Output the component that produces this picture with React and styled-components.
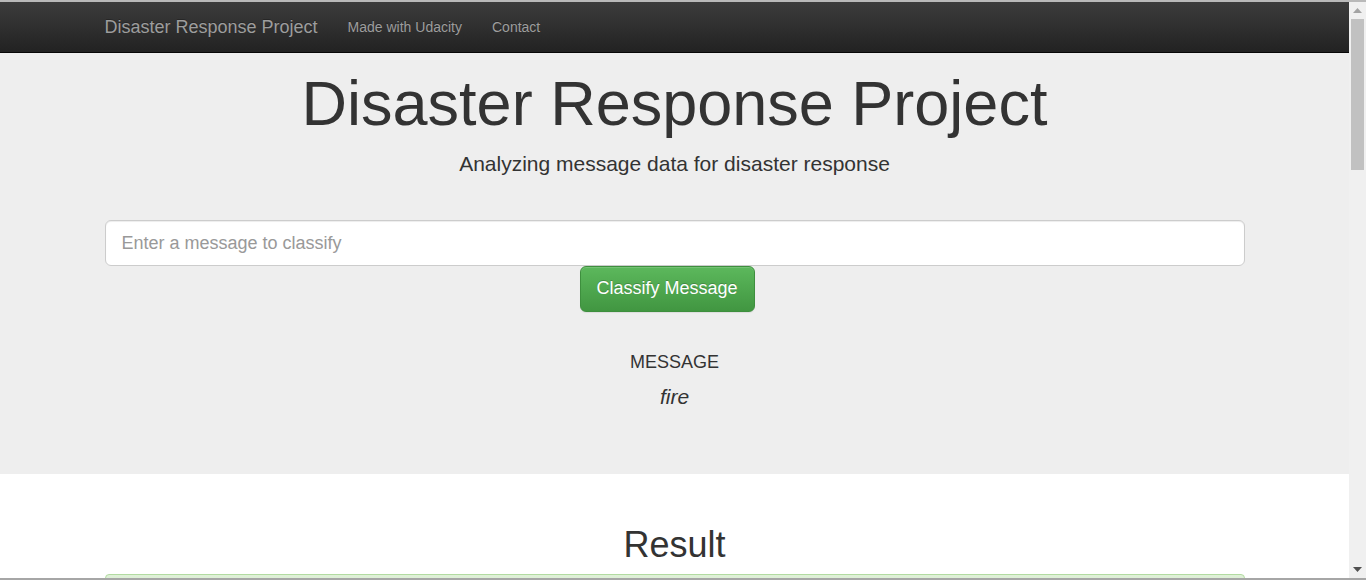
import styled, { createGlobalStyle } from "styled-components";

const GlobalStyle = createGlobalStyle`
  html, body {
    margin: 0;
    padding: 0;
    overflow: hidden;
  }
  body {
    font-family: "Liberation Sans", Arial, Helvetica, sans-serif;
    font-size: 14px;
    line-height: 1.42857;
    color: #333;
    background: #fff;
  }
  * {
    box-sizing: border-box;
  }
`;

const Frame = styled.div`
  display: flex;
  height: 580px;
  border-top: 2px solid #b9b9b9;
  border-bottom: 2px solid #a6a6a6;
  overflow: hidden;
`;

const Page = styled.div`
  flex: 1;
  min-width: 0;
  overflow: hidden;
`;

const Container = styled.div`
  width: 1170px;
  margin: 0 auto;
  padding: 0 15px;
`;

const Navbar = styled.nav`
  background-image: linear-gradient(to bottom, #3c3c3c 0, #222 100%);
  border-bottom: 1px solid #080808;
`;

const NavContainer = styled(Container)`
  display: flex;
  align-items: center;
  height: 50px;
`;

const Brand = styled.a`
  margin-left: -15px;
  padding: 15px;
  font-size: 18px;
  line-height: 20px;
  color: #9d9d9d;
  text-decoration: none;
  text-shadow: 0 -1px 0 rgba(0, 0, 0, 0.25);
`;

const NavLink = styled.a`
  padding: 15px;
  font-size: 14px;
  line-height: 20px;
  color: #9d9d9d;
  text-decoration: none;
  text-shadow: 0 -1px 0 rgba(0, 0, 0, 0.25);
`;

const Jumbotron = styled.header`
  background: #eee;
  padding: 16px 0 62px;
  text-align: center;
`;

const Title = styled.h1`
  margin: 0 0 11px;
  font-size: 63px;
  line-height: 1.1;
  font-weight: 400;
  color: #333;
`;

const Lead = styled.p`
  margin: 0;
  font-size: 21px;
  line-height: 30px;
`;

const Form = styled.form`
  display: flex;
  flex-direction: column;
  margin-top: 41px;
`;

const Input = styled.input`
  height: 46px;
  padding: 10px 16px;
  font-family: inherit;
  font-size: 18px;
  color: #555;
  background: #fff;
  border: 1px solid #ccc;
  border-radius: 6px;
  box-shadow: inset 0 1px 1px rgba(0, 0, 0, 0.075);
  outline: none;

  &::placeholder {
    color: #999;
  }
`;

const Button = styled.button`
  align-self: flex-start;
  margin-left: 475px;
  height: 46px;
  padding: 10px 16px;
  font-family: inherit;
  font-size: 18px;
  line-height: 1.3333;
  color: #fff;
  background-image: linear-gradient(to bottom, #5cb85c 0, #419641 100%);
  border: 1px solid #3e8f3e;
  border-radius: 6px;
  text-shadow: 0 -1px 0 rgba(0, 0, 0, 0.2);
  box-shadow: inset 0 1px 0 rgba(255, 255, 255, 0.15), 0 1px 1px rgba(0, 0, 0, 0.075);
  cursor: pointer;
`;

const Label = styled.h4`
  margin: 41px 0 0;
  font-size: 18px;
  line-height: 1.1;
  font-weight: 400;
`;

const Message = styled.p`
  margin: 9px 0 0;
  font-size: 21px;
  line-height: 30px;
  font-style: italic;
`;

const Results = styled(Container)`
  text-align: center;
`;

const ResultTitle = styled.h1`
  margin: 51px 0 9px;
  font-size: 36px;
  line-height: 1.1;
  font-weight: 400;
`;

const Alert = styled.div`
  height: 52px;
  background-image: linear-gradient(to bottom, #dff0d8 0, #c8e5bc 100%);
  border: 1px solid #b2dba1;
  border-radius: 4px;
`;

const ScrollTrack = styled.div`
  width: 17px;
  display: flex;
  flex-direction: column;
  background: #f0f0f0;
`;

const ScrollButton = styled.div`
  height: 17px;
  display: flex;
  align-items: center;
  justify-content: center;
`;

const Thumb = styled.div`
  height: 151px;
  margin: 0 2px;
  background: #c1c1c1;
`;

const Spacer = styled.div`
  flex: 1;
`;

const Arrow = ({ down, color }) => (
  <svg width="9" height="5" viewBox="0 0 9 5">
    <polygon points={down ? "0,0 9,0 4.5,5" : "0,5 9,5 4.5,0"} fill={color} />
  </svg>
);

const App = () => {
  return (
    <>
      <GlobalStyle />
      <Frame>
        <Page>
          <Navbar>
            <NavContainer>
              <Brand href="#">Disaster Response Project</Brand>
              <NavLink href="#">Made with Udacity</NavLink>
              <NavLink href="#">Contact</NavLink>
            </NavContainer>
          </Navbar>
          <Jumbotron>
            <Container>
              <Title>Disaster Response Project</Title>
              <Lead>Analyzing message data for disaster response</Lead>
              <Form onSubmit={(e) => e.preventDefault()}>
                <Input type="text" placeholder="Enter a message to classify" />
                <Button type="submit">Classify Message</Button>
              </Form>
              <Label>MESSAGE</Label>
              <Message>fire</Message>
            </Container>
          </Jumbotron>
          <Results>
            <ResultTitle>Result</ResultTitle>
            <Alert />
          </Results>
        </Page>
        <ScrollTrack>
          <ScrollButton>
            <Arrow color="#a3a3a3" />
          </ScrollButton>
          <Thumb />
          <Spacer />
          <ScrollButton>
            <Arrow down color="#505050" />
          </ScrollButton>
        </ScrollTrack>
      </Frame>
    </>
  );
};

export default App;
